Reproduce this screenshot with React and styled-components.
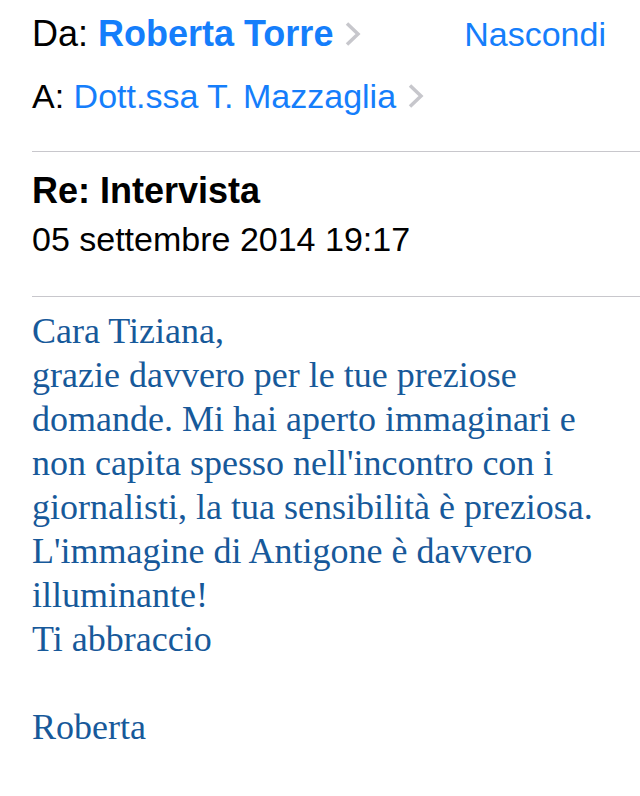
import React from "react"
import styled, { createGlobalStyle } from "styled-components"

const GlobalStyle = createGlobalStyle`
body {
    margin: 0;
    background: #ffffff;
}
`

export default function App() {
    return (
        <>
            <GlobalStyle />
            <Page>
                <Header>
                    <Row height="68px">
                        <Field size="36px">
                            <Label>Da: </Label>
                            <Contact bold>Roberta Torre</Contact>
                            <Chevron />
                        </Field>
                        <Action>Nascondi</Action>
                    </Row>
                    <Row height="56px">
                        <Field size="34px">
                            <Label>A: </Label>
                            <Contact>Dott.ssa T. Mazzaglia</Contact>
                            <Chevron />
                        </Field>
                    </Row>
                </Header>
                <Divider />
                <Subject>
                    <Title>Re: Intervista</Title>
                    <DateText>05 settembre 2014 19:17</DateText>
                </Subject>
                <Divider />
                <Body>
                    Cara Tiziana,<br />
                    grazie davvero per le tue preziose domande. Mi hai aperto immaginari e non capita spesso nell'incontro con i giornalisti, la tua sensibilità è preziosa. L'immagine di Antigone è davvero illuminante!<br />
                    Ti abbraccio<br />
                    <br />
                    Roberta
                </Body>
            </Page>
        </>
    )
}

function Chevron() {
    return (
        <ChevronIcon width="18" height="26" viewBox="0 0 18 26">
            <path d="M3 2.5 L14 13 L3 23.5" fill="none" stroke="#c7c7cc" strokeWidth="3.5" />
        </ChevronIcon>
    )
}

const Page = styled.div`
width: 640px;
height: 796px;
padding-left: 32px;
box-sizing: border-box;
font-family: "Liberation Sans", Arial, sans-serif;
overflow: hidden;
`

const Header = styled.div`
height: 151px;
`

const Row = styled.div`
display: flex;
align-items: center;
justify-content: space-between;
height: ${props => props.height};
padding-right: 34px;
`

const Field = styled.div`
display: flex;
align-items: center;
font-size: ${props => props.size};
white-space: pre;
`

const Label = styled.span`
color: #000000;
`

const Contact = styled.span`
color: #157efb;
font-weight: ${props => props.bold ? 700 : 400};
`

const ChevronIcon = styled.svg`
margin-left: 11px;
`

const Action = styled.span`
color: #157efb;
font-size: 34px;
`

const Divider = styled.div`
height: 1px;
background: #c8c7cc;
`

const Subject = styled.div`
height: 144px;
padding-top: 15px;
box-sizing: border-box;
color: #000000;
`

const Title = styled.div`
font-size: 36px;
font-weight: 700;
line-height: 48px;
`

const DateText = styled.div`
font-size: 34px;
line-height: 48px;
`

const Body = styled.div`
padding-top: 12px;
padding-right: 20px;
font-family: "Liberation Serif", "Times New Roman", serif;
font-size: 36px;
line-height: 44px;
color: #17599a;
`
